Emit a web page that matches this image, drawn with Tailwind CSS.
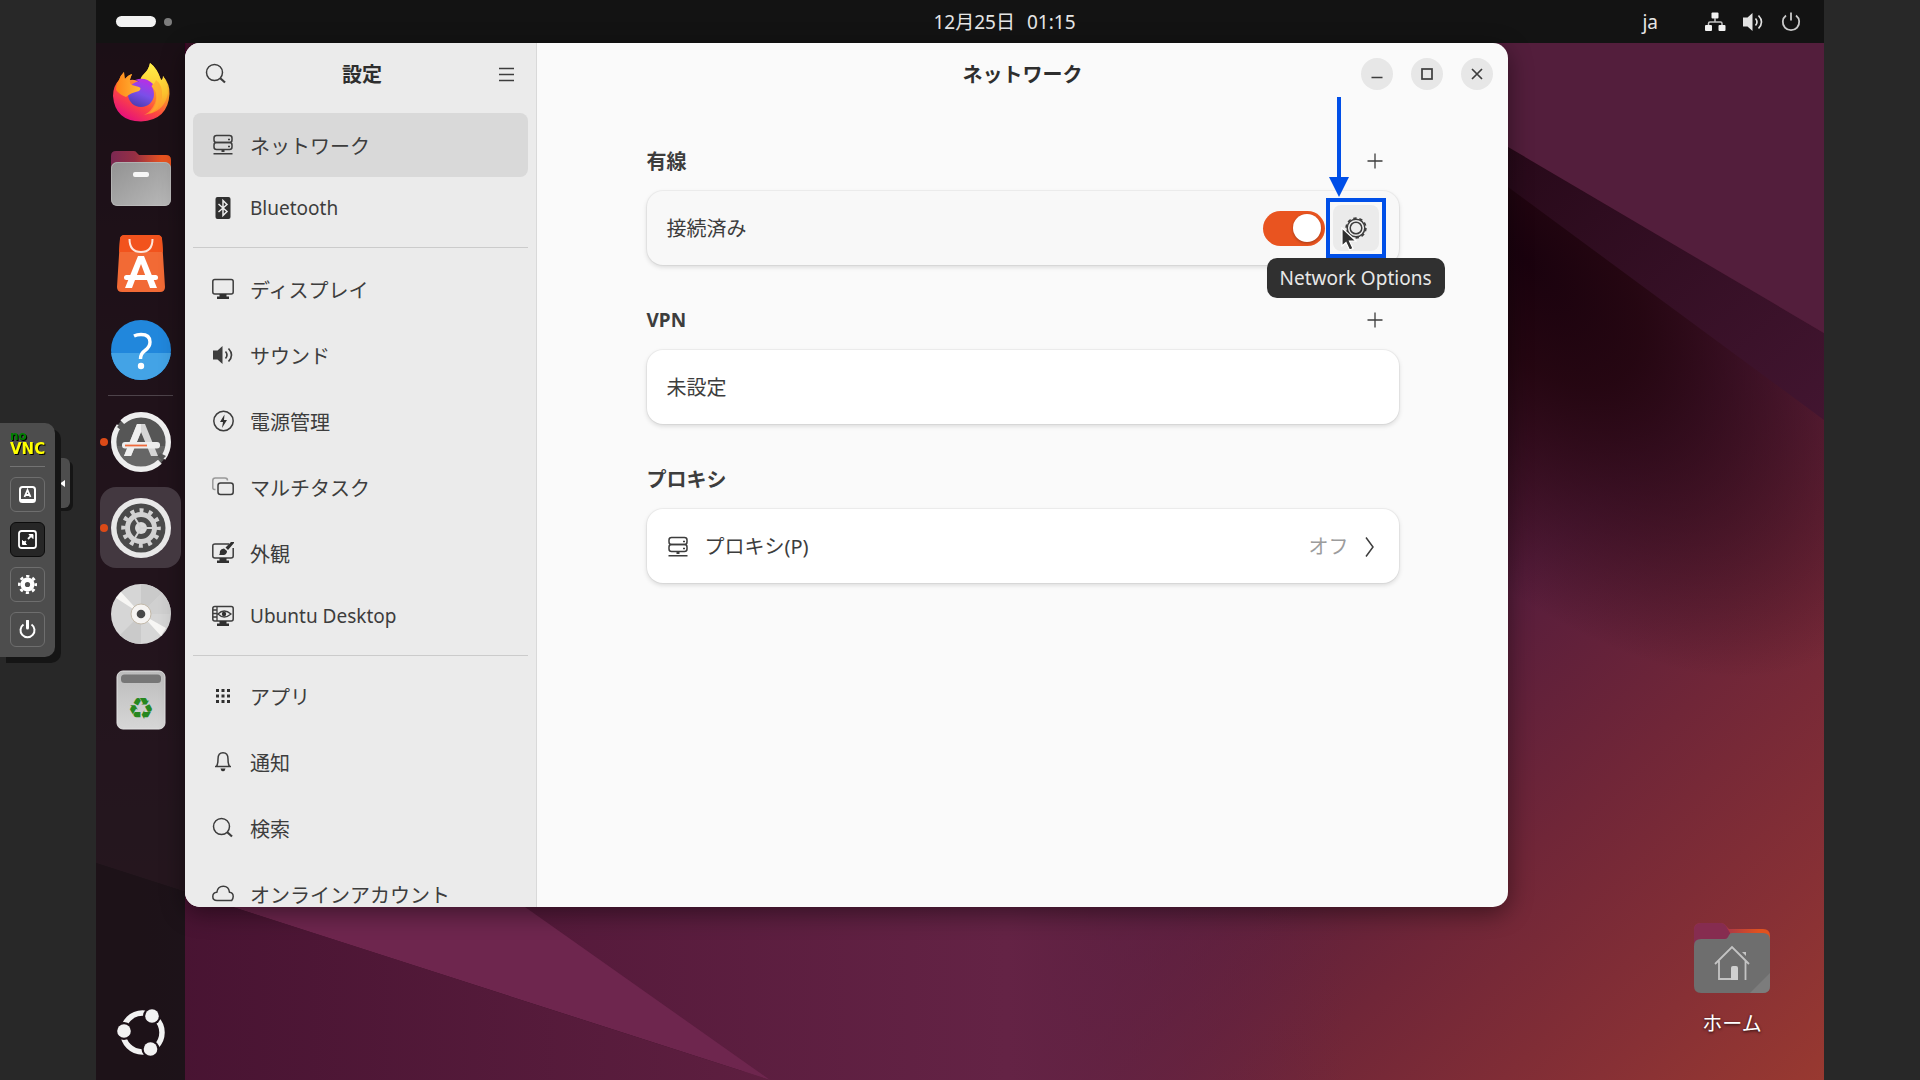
<!DOCTYPE html>
<html lang="ja">
<head>
  <meta charset="UTF-8" />
  <meta name="viewport" content="width=device-width, initial-scale=1.0"/>
  <title>設定 - ネットワーク</title>
  <script src="https://cdn.jsdelivr.net/npm/@tailwindcss/browser@4"></script>
</head>
<body class="bg-[#282828] font-['Noto_Sans','Noto_Sans_CJK_JP',sans-serif] text-xl leading-7 text-[#3d3d3d] h-screen overflow-hidden">

  <!-- Shared symbols -->
  <svg class="absolute size-0">
    <defs>
      <linearGradient id="back"><stop offset=".4" stop-color="#a8364a"/><stop offset=".85" stop-color="#e0521f"/></linearGradient>
    </defs>
    <symbol id="i-server" viewBox="0 0 22 22" fill="none" stroke="currentColor" stroke-width="1.5">
      <rect x="2" y="1.5" width="18" height="7" rx="2.5"/>
      <rect x="2" y="8.5" width="18" height="7" rx="2.5"/>
      <path d="M11 15.500v2M1.500 19.700h19M16 5.500h2M16 12.500h2"/>
      <path d="M9.500 17h3" stroke-width="2"/>
    </symbol>
    <symbol id="i-search" viewBox="0 0 22 22" fill="none" stroke="currentColor" stroke-width="1.5">
      <circle cx="9.500" cy="9.500" r="8"/>
      <path d="M15 15l5 4.500" stroke-width="2.200"/>
    </symbol>
    <symbol id="i-plus" viewBox="0 0 16 16" fill="none" stroke="currentColor" stroke-width="1.300">
      <path d="M8 .5v15M.5 8h15"/>
    </symbol>
    <symbol id="i-volume" viewBox="0 0 22 22" fill="none" stroke="currentColor">
      <path d="M1 6.500h4.500L10.500 2v18l-5-4.500H1z" fill="currentColor" stroke="none"/>
      <path d="M13.500 7.500q3 3.500 0 7" stroke-width="1.600"/>
      <path d="M16.500 4.500q6 6.500 0 13" stroke-width="1.600"/>
    </symbol>
    <symbol id="i-home-folder" viewBox="0 0 76 72">
      <path d="M0 32V8q0-7 7-7h20q3 0 5 3l3 3h34q7 0 7 7v18z" fill="url(#back)"/>
      <path d="M0 32V8q0-7 7-7h20q3 0 5 3l4 7v21z" fill="#862c50"/>
      <path d="M7 17h24q2 0 3-2l1-2q1-2 3-2h31q7 0 7 7v46q0 7-7 7H7q-7 0-7-7V24q0-7 7-7z" fill="#6e6e6e"/>
      <path d="M56 71l20-20v13q0 7-7 7z" fill="#7c7c7c"/>
      <g fill="none" stroke="#c4c4c4" stroke-width="1.800">
        <path d="M21 42l17-17 17 17M25 39v18h12M51.500 39v19"/>
        <path d="M37 57V46q0-2 2-2h3q2 0 2 2v12h-7z" fill="#cfcfcf" stroke="none"/>
        <path d="M48 30h4v4z" fill="#c4c4c4" stroke="none"/>
      </g>
    </symbol>
  </svg>

  <!-- Remote desktop -->
  <div class="relative mx-24 h-full flex flex-col overflow-hidden">

    <!-- Wallpaper -->
    <svg class="absolute inset-0 size-full -z-10" viewBox="0 0 1728 1080" preserveAspectRatio="none">
      <defs>
        <linearGradient id="w1" x1="0" y1="0" x2="0" y2="1">
          <stop offset="0" stop-color="#3c0023"/><stop offset=".75" stop-color="#651e48"/><stop offset="1" stop-color="#6e264e"/>
        </linearGradient>
        <linearGradient id="w2" x1="0" y1="0" x2="1" y2="0">
          <stop offset="0" stop-color="#451230"/><stop offset="1" stop-color="#5e1f40"/>
        </linearGradient>
        <linearGradient id="w3" gradientUnits="userSpaceOnUse" x1="1150" y1="480" x2="1728" y2="1100">
          <stop offset="0" stop-color="#3a1026"/><stop offset=".3" stop-color="#571d3c"/><stop offset=".55" stop-color="#702638"/><stop offset=".8" stop-color="#873035"/><stop offset="1" stop-color="#9a3a30"/>
        </linearGradient>
        <linearGradient id="w4" gradientUnits="userSpaceOnUse" x1="400" y1="0" x2="1250" y2="0">
          <stop offset="0" stop-color="#54193a"/><stop offset=".6" stop-color="#642345"/><stop offset="1" stop-color="#642345" stop-opacity="0"/>
        </linearGradient>
        <radialGradient id="w5" gradientUnits="userSpaceOnUse" cx="0" cy="0" r="1" gradientTransform="translate(1430 260) rotate(50) scale(500 260)">
          <stop offset="0" stop-color="#1a020e"/><stop offset=".3" stop-color="#22050f" stop-opacity=".92"/><stop offset="1" stop-color="#22050f" stop-opacity="0"/>
        </radialGradient>
        <linearGradient id="w6" x1="0" y1="0" x2="1" y2="1">
          <stop offset="0" stop-color="#270919"/><stop offset="1" stop-color="#421530"/>
        </linearGradient>
      </defs>
      <rect width="1728" height="1080" fill="url(#w3)"/>
      <path d="M100 700H1300L1250 1080H660z" fill="url(#w4)"/>
      <rect x="1100" y="60" width="628" height="800" fill="url(#w5)"/>
      <path d="M1412 187L1728 420V333L1412 147z" fill="url(#w6)"/>
      <path d="M1300 0H1728V333L1412 147 1300 81z" fill="#531e3c"/>
      <path d="M0 0H90V892L0 863z" fill="url(#w1)"/>
      <path d="M90 700H200L429 907 674 1080 90 892z" fill="#6e264e"/>
      <path d="M0 863L674 1080H0z" fill="url(#w2)"/>
    </svg>

    <!-- Top bar -->
    <header class="h-[43px] shrink-0 bg-[#131313] text-[#e6e6e6] text-[19px] grid grid-cols-[89px_1fr_auto_1fr] items-center">
      <button class="flex items-center gap-2 pl-5" aria-label="アクティビティ">
        <span class="w-10 h-[11px] rounded-full bg-[#f2f2f2]"></span>
        <span class="size-2 rounded-full bg-[#7d7d7d]"></span>
      </button>
      <span></span>
      <button class="flex gap-3"><span>12月25日</span><span>01:15</span></button>
      <div class="flex items-center justify-end pr-[22px]">
        <button class="mr-[46px]">ja</button>
        <button class="flex items-center gap-4" aria-label="システムメニュー">
          <svg class="size-[22px]" viewBox="0 0 22 22" fill="#f2f2f2">
            <rect x="7.500" y="1.500" width="7" height="6" rx="1"/><rect x="1" y="14" width="7" height="6" rx="1"/><rect x="14.500" y="14" width="7" height="6" rx="1"/>
            <path d="M11 7v4M4.500 14v-1.500q0-1.500 1.500-1.500h10.500q1.500 0 1.500 1.500V14" fill="none" stroke="#c4c4c4" stroke-width="1.500"/>
          </svg>
          <svg class="size-[22px] text-[#e2e2e2]"><use href="#i-volume"/></svg>
          <svg class="size-[22px]" viewBox="0 0 22 22" fill="none" stroke="#c9c9c9" stroke-width="1.800">
            <path d="M11 1.500v8M6 4.500a8.200 8.200 0 1 0 10 0"/>
          </svg>
        </button>
      </div>
    </header>

    <div class="flex-1 flex min-h-0">

      <!-- Dock -->
      <aside class="w-[89px] shrink-0 bg-[#131313]/80 flex flex-col items-center gap-[5px] pt-2 pb-5">
        <button class="size-[81px] grid place-items-center" aria-label="Firefox">
          <svg class="size-15" viewBox="0 0 60 60">
            <defs>
              <linearGradient id="ff1" x1=".85" y1=".1" x2=".3" y2="1">
                <stop offset="0" stop-color="#ffe03a"/><stop offset=".35" stop-color="#ff9a2b"/><stop offset=".65" stop-color="#ff4a3e"/><stop offset="1" stop-color="#e5107c"/>
              </linearGradient>
              <linearGradient id="ff2" x1=".7" y1="0" x2=".3" y2="1"><stop offset="0" stop-color="#b133e8"/><stop offset=".5" stop-color="#7a4fe8"/><stop offset="1" stop-color="#4a3cae"/></linearGradient>
              <linearGradient id="ff3" x1="0" y1="0" x2="0" y2="1"><stop offset="0" stop-color="#fff04a"/><stop offset=".6" stop-color="#ffc52e"/><stop offset="1" stop-color="#ff8a2c"/></linearGradient>
              <linearGradient id="ff4" x1="0" y1="0" x2="1" y2="0"><stop offset="0" stop-color="#ff8418"/><stop offset="1" stop-color="#ffbb36"/></linearGradient>
            </defs>
            <path d="M13 10Q9 14 8 18Q2 24 2 34Q4 59 30 59.500Q57 58 58.500 32Q59 22 52 14Q52 18 50 18Q46 6 39 1Q38 8 32 13L28 20Q24 17 19 18Q20 14 21 12Q17 13 13 18z" fill="url(#ff1)"/>
            <path d="M39 1Q38 7 33 12Q28 16 30 21Q41 21 45 30Q48 42 38 52Q54 48 57 31Q57 21 52 14Q52 18 50 18Q46 6 39 1z" fill="url(#ff3)"/>
            <path d="M39 23Q48 29 44 41Q40 50 33 53Q49 50 51 35Q52 23 45 18Q43 24 39 23z" fill="#ffa62f" opacity=".7"/>
            <circle cx="30" cy="32" r="13" fill="url(#ff2)"/>
            <path d="M24 18Q34 14 42 22L40 25Q36 20 30 20z" fill="#b033e5"/>
            <path d="M13 10Q9 14 8 18Q5 22 5 28Q9 33 15 35Q19 31 28 29Q31 26 28 25L21 23Q18 21 19 17L21 12Q17 13 14 17z" fill="url(#ff4)"/>
          </svg>
        </button>
        <button class="size-[81px] grid place-items-center" aria-label="ファイル">
          <svg class="w-15 h-14" viewBox="0 0 60 56">
            <defs>
              <linearGradient id="fb"><stop offset="0" stop-color="#7b2852"/><stop offset=".4" stop-color="#962f44"/><stop offset=".85" stop-color="#e9531f"/></linearGradient>
              <linearGradient id="fd" x1="0" y1="0" x2="1" y2="1"><stop offset="0" stop-color="#929292"/><stop offset="1" stop-color="#b9b9b9"/></linearGradient>
            </defs>
            <path d="M0 20V6q0-5 5-5h18q2 0 3 2l2 2h27q5 0 5 5v12z" fill="url(#fb)"/>
            <rect y="12" width="60" height="44" rx="6" fill="url(#fd)"/>
            <rect x=".5" y="12.500" width="59" height="43" rx="6" fill="none" stroke="#c2c2c2" stroke-opacity=".6"/>
            <rect x="22" y="22" width="16" height="5" rx="2" fill="#f7f7f7"/>
          </svg>
        </button>
        <button class="size-[81px] grid place-items-center" aria-label="アプリセンター">
          <svg class="size-15" viewBox="0 0 60 60">
            <path d="M9 5q.3-4 5-4h32q4.700 0 5 4l3 48q0 5-5 5H11q-5 0-5-5z" fill="#f26a35"/>
            <path d="M9 5q.3-4 5-4h32q4.700 0 5 4l1 13H8z" fill="#f2531d"/>
            <path d="M18.500 5q0 13 11.500 13t11.500-13" fill="none" stroke="#fde6dc" stroke-width="2"/>
            <path d="M27 22h6l13 32h-7l-9-24-9 24h-7z" fill="#fff"/>
            <rect x="13" y="41" width="34" height="5" rx="2.500" fill="#fff"/>
          </svg>
        </button>
        <button class="size-[81px] grid place-items-center" aria-label="ヘルプ">
          <svg class="size-15" viewBox="0 0 60 60">
            <circle cx="30" cy="30" r="30" fill="#2187dc"/>
            <path d="M.15 33a30 30 0 0 0 59.700 0z" fill="#43a3e6"/>
            <path d="M23 16q3-1.500 7-1.500 9 0 9 7.500 0 5-5 8.500-4.500 3-4.500 8.500" fill="none" stroke="#fff" stroke-width="3.400"/>
            <circle cx="30" cy="46" r="3.200" fill="#fff"/>
          </svg>
        </button>
        <hr class="w-[65px] border-t border-[#4d434a]">
        <button class="relative size-[81px] grid place-items-center" aria-label="ソフトウェアの更新">
          <span class="absolute left-0 size-2 rounded-full bg-[#dc4a17]"></span>
          <svg class="size-15" viewBox="0 0 60 60">
            <circle cx="30" cy="30" r="29" fill="#565656"/>
            <path d="M3.300 34a27 27 0 0 0 53.400 0z" fill="#666"/>
            <circle cx="30" cy="30" r="27.300" fill="none" stroke="#eee" stroke-width="5.400" stroke-dasharray="81 4.800" stroke-dashoffset="-22"/>
            <path d="M9 12l5 4-3 3-5-4zM51 48l-5-4 3-3 6 3z" fill="#565656"/>
            <path d="M26 12h8l13 32h-7l-10-24-10 24h-7z" fill="#d6d6d6"/>
            <path d="M26 12h4v8l-10 24h-7z" fill="#efefef"/>
            <rect x="11" y="30" width="38" height="6.500" rx="3" fill="#ededed"/>
            <path d="M14 33.500h22" stroke="#ef6a3c" stroke-width="1.800"/>
          </svg>
        </button>
        <button class="relative size-[81px] grid place-items-center rounded-2xl bg-[#433840]" aria-label="設定">
          <span class="absolute left-0 size-2 rounded-full bg-[#dc4a17]"></span>
          <svg class="size-15" viewBox="0 0 60 60">
            <circle cx="30" cy="30" r="30" fill="#e8e8e8"/>
            <circle cx="30" cy="30" r="24.500" fill="#4a4a4a"/>
            <circle cx="30" cy="30" r="13.500" fill="none" stroke="#d2d2d2" stroke-width="5"/>
            <circle cx="30" cy="30" r="17.500" fill="none" stroke="#d2d2d2" stroke-width="4.600" stroke-dasharray="4 5.163" stroke-dashoffset="2"/>
            <circle cx="30" cy="30" r="6" fill="#d8d8d8"/>
            <path d="M30 30h13M30 30l-7-11.500M30 30l-7 11.500" stroke="#d2d2d2" stroke-width="2"/>
          </svg>
        </button>
        <button class="size-[81px] grid place-items-center" aria-label="ディスク">
          <svg class="size-15" viewBox="0 0 60 60">
            <circle cx="30" cy="30" r="30" fill="#d6d6d6"/>
            <path d="M30 30V0A30 30 0 0 1 51 9zM30 30v30A30 30 0 0 1 9 51z" fill="#cacaca"/>
            <path d="M30 30L51 9A30 30 0 0 1 60 30z" fill="#d0d0d0"/>
            <path d="M30 30L5 14 10 8zM30 30l25 14-5 8z" fill="#f7f6f4"/>
            <circle cx="30" cy="30" r="10" fill="#f6f4f2" stroke="#c3b9a9"/>
            <circle cx="30" cy="30" r="4.300" fill="#484848"/>
          </svg>
        </button>
        <button class="size-[81px] grid place-items-center" aria-label="ゴミ箱">
          <svg class="size-15" viewBox="0 0 60 60">
            <defs><linearGradient id="tr" x1="0" y1="0" x2="0" y2="1"><stop offset="0" stop-color="#bcbcbc"/><stop offset="1" stop-color="#d6d6d6"/></linearGradient></defs>
            <rect x="6" y="1" width="48" height="58" rx="6" fill="url(#tr)" stroke="#e3e3e3"/>
            <rect x="10" y="4.500" width="40" height="8.500" rx="3.500" fill="#777"/>
            <text x="30" y="49" text-anchor="middle" class="font-['DejaVu_Sans',sans-serif] text-3xl" fill="#27881f">♻</text>
          </svg>
        </button>
        <button class="mt-auto size-14 grid place-items-center" aria-label="アプリを表示する">
          <svg class="size-12" viewBox="0 0 48 48" fill="#f2f2f2">
            <mask id="cut"><rect width="60" height="60" fill="#fff"/><g fill="#000"><circle cx="7" cy="23" r="9"/><circle cx="35" cy="8" r="9"/><circle cx="33.500" cy="41" r="9"/></g></mask>
            <circle cx="25.500" cy="24.500" r="19.500" fill="none" stroke="#f2f2f2" stroke-width="5.500" mask="url(#cut)"/>
            <circle cx="7" cy="23" r="6.800"/><circle cx="35" cy="8" r="6.800"/><circle cx="33.500" cy="41" r="6.800"/>
          </svg>
        </button>
      </aside>

      <!-- Workspace -->
      <div class="flex-1 min-w-0 flex pr-[316px] pb-[173px]">

        <!-- Settings window -->
        <section class="flex-1 min-w-0 flex overflow-hidden rounded-[15px] bg-[#fafafa] shadow-[0_6px_24px_rgba(0,0,0,0.45)]">

          <!-- Sidebar -->
          <nav class="w-[352px] shrink-0 bg-[#ebebeb] border-r border-[#d9d9d9] flex flex-col px-2 overflow-hidden">
            <div class="h-[62px] shrink-0 flex items-center justify-between px-3">
              <button aria-label="検索"><svg class="size-[22px]"><use href="#i-search"/></svg></button>
              <h1 class="font-bold text-[#2e2e2e] pt-[2px]">設定</h1>
              <button aria-label="メニュー" class="px-[2px]">
                <svg class="size-[15px]" viewBox="0 0 15 15" stroke="#3d3d3d" stroke-width="1.500"><path d="M0 1.500h15M0 7.500h15M0 13.500h15"/></svg>
              </button>
            </div>

            <ul class="flex flex-col gap-[2px] mt-2">
              <li><a href="#" class="h-16 flex items-center gap-4 pl-[19px] rounded-lg bg-[#d9d9d9]">
                <svg class="size-[22px]"><use href="#i-server"/></svg><span class="pt-1">ネットワーク</span></a></li>
              <li><a href="#" class="h-[58px] flex items-center gap-4 pl-[19px] text-[19px]">
                <svg class="size-[22px]" viewBox="0 0 22 22"><rect x="3.500" width="15" height="22" rx="2" fill="#303030"/><path d="M6.500 7l8.500 7.500-4 4v-15l4 4L6.500 15" fill="none" stroke="#ebebeb" stroke-width="1.500"/></svg>Bluetooth</a></li>
            </ul>
            <hr class="shrink-0 mt-[10px] mb-[9px] border-t border-[#cbcbcb]">
            <ul class="flex flex-col gap-[2px]">
              <li><a href="#" class="h-16 flex items-center gap-4 pl-[19px]">
                <svg class="size-[22px]" viewBox="0 0 22 22"><rect x=".8" y="1.500" width="20.400" height="14.500" rx="2" fill="none" stroke="currentColor" stroke-width="1.500"/><path d="M7.500 16h7v2.500H17V21H5v-2.500h2.500z" fill="#303030"/></svg><span class="pt-1">ディスプレイ</span></a></li>
              <li><a href="#" class="h-16 flex items-center gap-4 pl-[19px]">
                <svg class="size-[22px]"><use href="#i-volume"/></svg><span class="pt-1">サウンド</span></a></li>
              <li><a href="#" class="h-16 flex items-center gap-4 pl-[19px]">
                <svg class="size-[22px]" viewBox="0 0 22 22"><circle cx="11.500" cy="11" r="9.700" fill="none" stroke="currentColor" stroke-width="1.500"/><path d="M12.500 4.500L8 12h3l-1 6 5-8h-3z" fill="#303030"/></svg><span class="pt-1">電源管理</span></a></li>
              <li><a href="#" class="h-16 flex items-center gap-4 pl-[19px]">
                <svg class="size-[22px]" viewBox="0 0 22 22" fill="none" stroke-width="1.500"><path d="M3.500 13.500h-1Q.8 13.500.8 11.500v-7q0-2.500 2.500-2.500H13q2.500 0 2.500 2.500" stroke="#999"/><rect x="6" y="7" width="15.200" height="11.500" rx="2.500" stroke="currentColor"/></svg><span class="pt-1">マルチタスク</span></a></li>
              <li><a href="#" class="h-16 flex items-center gap-4 pl-[19px]">
                <svg class="size-[22px]" viewBox="0 0 22 22"><path d="M17 2H3Q.8 2 .8 4v10q0 2 2.200 2h16q2.200 0 2.200-2V6" fill="none" stroke="currentColor" stroke-width="1.500"/><path d="M7.500 16h7v2.500H17V21H5v-2.500h2.500z" fill="#303030"/><path d="M7 13q1-1 1-4 1-2.500 4-2.500l3 2.500q0 3-3 4zM13.500 5.500L19 0h3v1l-6 7z" fill="#303030"/></svg><span class="pt-1">外観</span></a></li>
              <li><a href="#" class="h-[58px] flex items-center gap-4 pl-[19px] text-[19px]">
                <svg class="size-[22px]" viewBox="0 0 22 22"><rect x=".8" y="1.500" width="20.400" height="14.500" rx="2" fill="none" stroke="currentColor" stroke-width="1.500"/><path d="M7.500 16h7v2.500H17V21H5v-2.500h2.500z" fill="#303030"/><path d="M5 2v14M1 5h4M1 8.500h4M1 12h4M6 9q6-6 13 0-7 6-13 0z" fill="none" stroke="currentColor" stroke-width="1.300"/><circle cx="12" cy="9" r="2.200" fill="#303030"/></svg>Ubuntu Desktop</a></li>
            </ul>
            <hr class="shrink-0 mt-[10px] mb-2 border-t border-[#cbcbcb]">
            <ul class="flex flex-col gap-[2px]">
              <li><a href="#" class="h-16 flex items-center gap-4 pl-[19px]">
                <svg class="size-[22px]" viewBox="0 0 22 22" stroke="#303030" stroke-width="3" stroke-dasharray="3 2.500"><path d="M4 5.500h14M4 11h14M4 16.500h14"/></svg><span class="pt-1">アプリ</span></a></li>
              <li><a href="#" class="h-16 flex items-center gap-4 pl-[19px]">
                <svg class="size-[22px]" viewBox="0 0 22 22"><path d="M3 15.500h16M4.500 15.500Q6 13 6 8q0-6.200 5-6.200T16 8q0 5 1.500 7.500" fill="none" stroke="currentColor" stroke-width="1.500"/><path d="M8.500 17.500h5q-.5 2.700-2.500 2.700t-2.500-2.700z" fill="#303030"/></svg><span class="pt-1">通知</span></a></li>
              <li><a href="#" class="h-16 flex items-center gap-4 pl-[19px]">
                <svg class="size-[22px]"><use href="#i-search"/></svg><span class="pt-1">検索</span></a></li>
              <li><a href="#" class="h-16 flex items-center gap-4 pl-[19px]">
                <svg class="size-[22px]" viewBox="0 0 22 22"><path d="M5 17.500q-4.200 0-4.200-4 0-3.700 4-4.200 1-6 6.500-6t6.200 6q3.700.5 3.700 4.200 0 2-1.500 4z" fill="none" stroke="currentColor" stroke-width="1.500" stroke-linejoin="round"/></svg><span class="pt-1">オンラインアカウント</span></a></li>
            </ul>
          </nav>

          <!-- Network page -->
          <main class="flex-1 min-w-0">
            <div class="h-[62px] grid grid-cols-[1fr_auto_1fr] items-center px-[15px]">
              <span></span>
              <h2 class="font-bold text-[#2e2e2e] pt-[2px]">ネットワーク</h2>
              <div class="flex justify-end gap-[18px]">
                <button class="size-8 rounded-full bg-[#e7e7e7] grid place-items-center" aria-label="最小化">
                  <svg class="size-4" viewBox="0 0 16 16" stroke="#3d3d3d" stroke-width="1.500"><path d="M2.500 11.500h11"/></svg>
                </button>
                <button class="size-8 rounded-full bg-[#e7e7e7] grid place-items-center" aria-label="最大化">
                  <svg class="size-4" viewBox="0 0 16 16" fill="none" stroke="#3d3d3d" stroke-width="1.700"><rect x="3" y="3" width="10" height="10"/></svg>
                </button>
                <button class="size-8 rounded-full bg-[#e7e7e7] grid place-items-center" aria-label="閉じる">
                  <svg class="size-4" viewBox="0 0 16 16" fill="none" stroke="#3d3d3d" stroke-width="1.700"><path d="M3 3l10 10M13 3L3 13"/></svg>
                </button>
              </div>
            </div>

            <div class="max-w-[752px] mx-auto pt-10 flex flex-col gap-[39px]">

              <!-- Wired -->
              <section class="flex flex-col gap-[14px]">
                <div class="h-8 flex items-center justify-between pr-2">
                  <h3 class="font-bold pt-[2px]">有線</h3>
                  <button class="size-8 grid place-items-center" aria-label="接続を追加"><svg class="size-4"><use href="#i-plus"/></svg></button>
                </div>
                <div class="h-[74px] flex items-center rounded-2xl bg-[#f8f8f8] px-5 shadow-[0_0_0_1px_rgba(0,0,0,0.04),0_2px_5px_rgba(0,0,0,0.14)]">
                  <label for="wired" class="flex-1 pt-[2px]">接続済み</label>
                  <input id="wired" type="checkbox" checked class="appearance-none w-[62px] h-[35px] mr-2 px-1 rounded-full bg-[#cfcfcf] checked:bg-[#e95420] grid items-center justify-items-start checked:justify-items-end before:content-[''] before:size-7 before:rounded-full before:bg-white before:shadow-[0_1px_3px_rgba(0,0,0,0.3)]">
                  <div class="relative">
                    <button class="size-[46px] grid place-items-center rounded-lg bg-[#ebebeb]" aria-label="Network Options">
                      <svg class="size-[22px]" viewBox="0 0 22 22" fill="none" stroke="#3d3d3d">
                        <circle cx="11" cy="11" r="8.800" stroke-width="1.500"/>
                        <circle cx="11" cy="11" r="5.800" stroke-width="1.500"/>
                        <circle cx="11" cy="11" r="9.900" stroke-width="1.600" stroke-dasharray="3.400 2.820"/>
                      </svg>
                    </button>
                    <span role="tooltip" class="absolute z-10 top-full left-1/2 -translate-x-1/2 mt-[7px] h-10 px-[13px] flex items-center rounded-[10px] bg-[#303030] text-[#e8e8e8] text-[19px] whitespace-nowrap">Network Options</span>
                    <!-- Callout frame and arrow -->
                    <span class="absolute z-20 -inset-[7px] border-4 border-[#004fe8] pointer-events-none"></span>
                    <svg class="absolute z-20 bottom-[54px] -left-1 w-5 h-[100px]" viewBox="0 0 20 100" fill="#004fe8"><path d="M8 0h4v80h8l-10 20L0 80h8z"/></svg>
                    <!-- Pointer -->
                    <svg class="absolute z-20 top-[22px] left-2 w-4 h-6" viewBox="0 0 16 24"><path d="M1 1v18l4-3.500 3.500 7.500 3.500-1.500-3.500-7.500H15z" fill="#303030" stroke="#fff" stroke-width="1.200"/></svg>
                  </div>
                </div>
              </section>

              <!-- VPN -->
              <section class="flex flex-col gap-[14px]">
                <div class="h-8 flex items-center justify-between pr-2">
                  <h3 class="font-bold text-[19px]">VPN</h3>
                  <button class="size-8 grid place-items-center" aria-label="VPN を追加"><svg class="size-4"><use href="#i-plus"/></svg></button>
                </div>
                <div class="h-[74px] flex items-center rounded-2xl bg-white px-5 pt-[2px] shadow-[0_0_0_1px_rgba(0,0,0,0.04),0_2px_5px_rgba(0,0,0,0.14)]">未設定</div>
              </section>

              <!-- Proxy -->
              <section class="flex flex-col gap-[14px]">
                <div class="h-8 flex items-center pt-[2px]"><h3 class="font-bold">プロキシ</h3></div>
                <a href="#" class="h-[74px] flex items-center rounded-2xl bg-white px-5 pt-[2px] shadow-[0_0_0_1px_rgba(0,0,0,0.04),0_2px_5px_rgba(0,0,0,0.14)]">
                  <svg class="size-[22px] mr-4"><use href="#i-server"/></svg>
                  <span class="flex-1">プロキシ(P)</span>
                  <span class="text-[#9c9c9c]">オフ</span>
                  <svg class="w-[10px] h-5 ml-4 mr-1" viewBox="0 0 10 20" fill="none" stroke="#3d3d3d" stroke-width="1.500"><path d="M1 .5l7 9.500-7 9.500"/></svg>
                </a>
              </section>
            </div>
          </main>
        </section>
      </div>
    </div>

    <!-- Desktop icon -->
    <a href="#" class="absolute right-[54px] bottom-[42px] w-[76px] flex flex-col items-center gap-4 text-white [text-shadow:0_1px_3px_rgba(0,0,0,0.8)]">
      <svg class="w-[76px] h-[72px]"><use href="#i-home-folder"/></svg>
      ホーム
    </a>
  </div>

  <!-- noVNC control bar -->
  <aside class="fixed inset-y-0 left-0 flex items-center pointer-events-none">
    <div class="relative">
      <button class="absolute left-full top-[35px] w-[15px] h-[50px] rounded-r-md bg-[#4d4d4d] shadow-[3px_3px_0_#151515] grid place-items-center" aria-label="コントロールバーを閉じる">
        <svg class="w-[5px] h-[7px]" viewBox="0 0 5 7" fill="#fff"><path d="M5 0v7L0 3.500z"/></svg>
      </button>
      <div class="relative w-[55px] h-[234px] pt-[7px] px-[10px] rounded-r-[10px] bg-[#4d4d4d] shadow-[6px_6px_0_#151515] flex flex-col gap-[10px]">
        <h1 class="h-[37px] border-b border-[#737373] font-['DejaVu_Sans',sans-serif] font-bold leading-[13px] text-[15px] text-[#ffff00] [text-shadow:1px_1px_0_#000]"><span class="block text-xs leading-[13px] text-[#008000]">no</span><span class="block">VNC</span></h1>
        <button class="size-[35px] rounded-md border border-[#6e6e6e] grid place-items-center" aria-label="キーボード">
          <svg class="size-[19px]" viewBox="0 0 19 19" fill="none" stroke="#fff" stroke-width="2"><rect x="2" y="2" width="15" height="15" rx="2.500"/><path d="M2 15.500h15" stroke-width="3"/><path d="M6.500 12L9.500 5l3 7M7.500 10h4" stroke-width="1.800"/></svg>
        </button>
        <button class="size-[35px] rounded-md border border-[#0c0c0c] bg-[#262626] grid place-items-center" aria-label="全画面">
          <svg class="size-[19px]" viewBox="0 0 19 19" fill="none" stroke="#fff" stroke-width="1.800"><rect x="1" y="1" width="17" height="17" rx="2.500"/><path d="M11 4.500h4v4zM4.500 10.500v4h4z" fill="#fff" stroke-width="1"/><path d="M10 9l4-4M5 14l4-4" stroke-dasharray="4 3"/></svg>
        </button>
        <button class="size-[35px] rounded-md border border-[#6e6e6e] grid place-items-center" aria-label="設定">
          <svg class="size-[19px]" viewBox="0 0 19 19" fill="none" stroke="#fff"><circle cx="9.500" cy="9.500" r="4.800" stroke-width="4.400"/><circle cx="9.500" cy="9.500" r="8.200" stroke-width="2.600" stroke-dasharray="3.220 3.220" stroke-dashoffset="1.610"/></svg>
        </button>
        <button class="size-[35px] rounded-md border border-[#6e6e6e] grid place-items-center" aria-label="切断">
          <svg class="size-[19px]" viewBox="0 0 19 19" fill="none" stroke="#fff" stroke-width="2"><path d="M5.500 4.500a7 7 0 1 0 8 0"/><path d="M9.500 1v7" stroke-width="3" stroke-linecap="round"/></svg>
        </button>
      </div>
    </div>
  </aside>

</body>
</html>
